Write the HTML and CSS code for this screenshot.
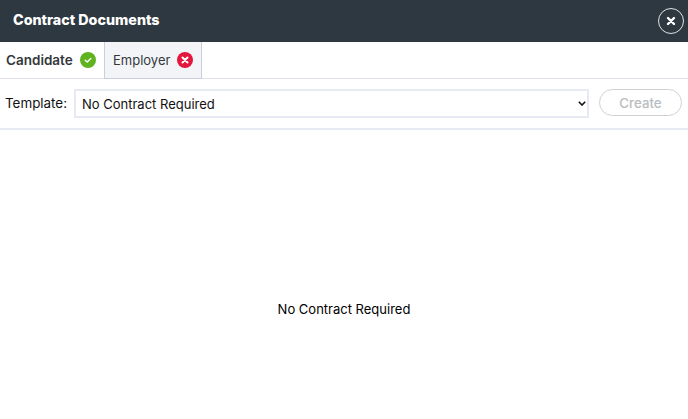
FILE: index.html
```html
<!DOCTYPE html>
<html lang="en">
<head>
<meta charset="utf-8">
<title>Contract Documents</title>
<link rel="stylesheet" href="styles.css">
</head>
<body>
<header class="header">
  <h1 class="title">Contract Documents</h1>
  <button class="close" type="button" aria-label="Close">
    <svg width="10" height="10" viewBox="0 0 10 10"><path d="M2 2l6 6M8 2l-6 6" stroke="#fff" stroke-width="2.400" stroke-linecap="round"/></svg>
  </button>
</header>
<nav class="tabs">
  <div class="tab tab-active">
    <span>Candidate</span>
    <svg class="status" width="16" height="16" viewBox="0 0 16 16"><circle cx="8" cy="8" r="8" fill="#5fb320"/><path d="M5.200 8.200l2 1.900L10.800 6.400" fill="none" stroke="#fff" stroke-width="1.400" stroke-linecap="round" stroke-linejoin="round"/></svg>
  </div>
  <div class="tab tab-idle">
    <span>Employer</span>
    <svg class="status" width="16" height="16" viewBox="0 0 16 16"><circle cx="8" cy="8" r="8" fill="#e3173e"/><path d="M5.500 5.500l5 5M10.500 5.500l-5 5" stroke="#fff" stroke-width="2" stroke-linecap="round"/></svg>
  </div>
</nav>
<section class="toolbar">
  <label class="label" for="template">Template:</label>
  <div class="select-wrap">
    <select class="select" id="template">
      <option>No Contract Required</option>
    </select>
    <svg class="chevron" width="8" height="5" viewBox="0 0 8 5"><path d="M.8.800L4 4 7.200.800" fill="none" stroke="#111" stroke-width="1.600"/></svg>
  </div>
  <button class="create" type="button" disabled>Create</button>
</section>
<main class="content">No Contract Required</main>
</body>
</html>
```
FILE: styles.css
```css
* { box-sizing: border-box; }
html, body { margin: 0; height: 100%; }
body {
  background: #fff;
  color: #000;
  font-family: "Inter", "Noto Sans", sans-serif;
  font-size: 13px;
  overflow: hidden;
  display: flex;
  flex-direction: column;
}
.header {
  height: 42px;
  flex: none;
  background: #2e3840;
  display: flex;
  align-items: center;
  justify-content: space-between;
  padding: 0 4px 3px 13px;
}
.title {
  margin: 0;
  color: #fff;
  font-size: 14.300px;
  font-weight: 800;
}
.close {
  width: 26px;
  height: 26px;
  padding: 0;
  margin-top: 3px;
  border: 1px solid #dfe3e6;
  border-radius: 50%;
  background: transparent;
  display: flex;
  align-items: center;
  justify-content: center;
}
.tabs {
  height: 37px;
  flex: none;
  display: flex;
  border-bottom: 1px solid #dfe2ec;
}
.tab {
  display: flex;
  align-items: center;
  gap: 7px;
  height: 36px;
  color: #33383d;
}
.tab-active {
  width: 104px;
  padding-left: 6px;
  font-size: 13.500px;
  font-weight: 600;
}
.tab-idle {
  width: 98px;
  padding-left: 8px;
  background: #f3f4f7;
  border-left: 1px solid #c9cfdd;
  border-right: 1px solid #c9cfdd;
  margin-bottom: -1px;
  height: 37px;
  border-bottom: 1px solid #c9cfdd;
}
.toolbar {
  height: 51px;
  flex: none;
  display: flex;
  align-items: center;
  padding: 0 6px 0 5px;
  border-bottom: 2px solid #e8eaf3;
}
.label {
  width: 69px;
  flex: none;
  color: #111;
  font-size: 13.400px;
  margin-bottom: 1px;
}
.select-wrap {
  position: relative;
  width: 515px;
  height: 29px;
  flex: none;
}
.select {
  display: block;
  width: 100%;
  height: 100%;
  padding: 0 20px 0 6px;
  border: 2px solid #e8eaf3;
  border-radius: 0;
  background: #fff;
  color: #111;
  font: inherit;
  appearance: none;
}
.chevron {
  position: absolute;
  right: 3px;
  top: 12px;
  pointer-events: none;
}
.create {
  width: 83px;
  height: 27px;
  flex: none;
  margin: 0 0 2px 10px;
  border: 1px solid #ced1d4;
  border-radius: 14px;
  background: #fff;
  color: #b9bcc0;
  font: inherit;
  font-size: 13.300px;
  font-weight: 500;
}
.content {
  flex: 1;
  display: flex;
  align-items: center;
  justify-content: center;
  padding-top: 69px;
}
```
